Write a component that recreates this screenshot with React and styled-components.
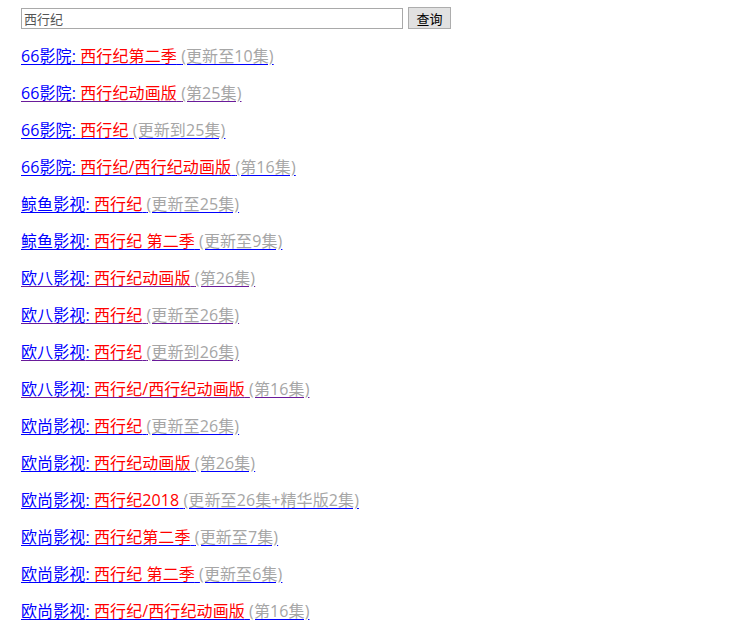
import React from "react";
import styled, { createGlobalStyle } from "styled-components";

const Global = createGlobalStyle`
  html, body { margin: 0; padding: 0; background: #fff; }
  body {
    font-family: "Open Sans", "Noto Sans CJK SC", sans-serif;
    font-size: 16px;
    color: #000;
  }
`;

const Page = styled.div`
  padding: 7px 21px 0;
`;

const SearchForm = styled.form`
  display: flex;
  align-items: center;
  gap: 5px;
  height: 22px;
  margin: 0;
`;

const SearchInput = styled.input`
  box-sizing: border-box;
  width: 382px;
  height: 21px;
  margin: 0;
  padding: 0 2px;
  border: 1px solid #a9a9a9;
  font-family: "Open Sans", "Noto Sans CJK SC", sans-serif;
  font-size: 13px;
  color: #555;
  outline: none;
`;

const SearchButton = styled.button`
  box-sizing: border-box;
  width: 43px;
  height: 22px;
  margin: 0;
  padding: 0;
  border: 1px solid #adadad;
  background: #e1e1e1;
  font-family: "Open Sans", "Noto Sans CJK SC", sans-serif;
  font-size: 13px;
  color: #000;
`;

const List = styled.div`
  display: flex;
  flex-direction: column;
  padding-top: 1px;
`;

const Item = styled.div`
  margin-top: 16px;
  line-height: 21px;
  height: 21px;
  white-space: nowrap;
  letter-spacing: 0.1px;
`;

const Link = styled.a`
  color: #0000ff;
  text-decoration: underline;
  text-decoration-color: ${(p) => (p.$visited ? "#6a1b9a" : "#0000ff")};
  text-underline-offset: 2px;
`;

const Title = styled.span`
  color: #ff0000;
`;

const Status = styled.span`
  color: #a6a6a6;
`;

const items = [
  ["66影院", "西行纪第二季", "(更新至10集)", false],
  ["66影院", "西行纪动画版", "(第25集)", true],
  ["66影院", "西行纪", "(更新到25集)", false],
  ["66影院", "西行纪/西行纪动画版", "(第16集)", false],
  ["鲸鱼影视", "西行纪", "(更新至25集)", false],
  ["鲸鱼影视", "西行纪 第二季", "(更新至9集)", false],
  ["欧八影视", "西行纪动画版", "(第26集)", true],
  ["欧八影视", "西行纪", "(更新至26集)", true],
  ["欧八影视", "西行纪", "(更新到26集)", true],
  ["欧八影视", "西行纪/西行纪动画版", "(第16集)", true],
  ["欧尚影视", "西行纪", "(更新至26集)", false],
  ["欧尚影视", "西行纪动画版", "(第26集)", false],
  ["欧尚影视", "西行纪2018", "(更新至26集+精华版2集)", false],
  ["欧尚影视", "西行纪第二季", "(更新至7集)", false],
  ["欧尚影视", "西行纪 第二季", "(更新至6集)", false],
  ["欧尚影视", "西行纪/西行纪动画版", "(第16集)", false],
];

export default function App() {
  return (
    <>
      <Global />
      <Page>
        <SearchForm onSubmit={(e) => e.preventDefault()}>
          <SearchInput defaultValue="西行纪" />
          <SearchButton type="submit">查询</SearchButton>
        </SearchForm>
        <List>
          {items.map(([site, title, status, visited], i) => (
            <Item key={i}>
              <Link href="#" $visited={visited}>
                {site}: <Title>{title} </Title>
                <Status>{status}</Status>
              </Link>
            </Item>
          ))}
        </List>
      </Page>
    </>
  );
}
